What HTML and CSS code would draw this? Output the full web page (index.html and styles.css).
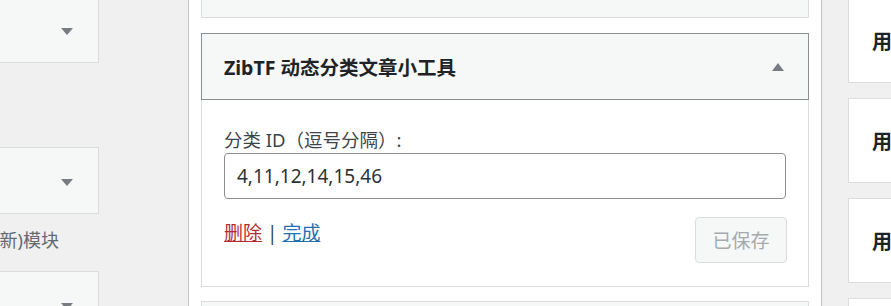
FILE: index.html
```html
<!DOCTYPE html>
<html lang="zh-CN">
<head>
<meta charset="UTF-8">
<meta name="viewport" content="width=device-width, initial-scale=1.0">
<title>小工具</title>
<link rel="stylesheet" href="styles.css">
</head>
<body>

<!-- 可用小工具 -->
<div class="available">
  <div class="avail-item first">
    <div class="avail-top"><span class="arrow-down"></span></div>
  </div>
  <div class="avail-item">
    <div class="avail-top"><span class="arrow-down"></span></div>
    <div class="avail-desc"><span>显示文章列表(最新)模块</span></div>
  </div>
  <div class="avail-item">
    <div class="avail-top"><span class="arrow-down"></span></div>
  </div>
</div>

<!-- 侧边栏 -->
<div class="sidebar">
  <div class="widget-closed first"></div>

  <div class="widget">
    <div class="widget-top">
      <h3>ZibTF 动态分类文章小工具</h3>
      <span class="arrow-up"></span>
    </div>
    <div class="widget-inside">
      <label for="cats">分类 ID（逗号分隔）:</label>
      <input type="text" id="cats" value="4,11,12,14,15,46">
      <div class="widget-actions">
        <div class="links">
          <a href="#" class="delete">删除</a> | <a href="#" class="done">完成</a>
        </div>
        <button type="button" disabled>已保存</button>
      </div>
    </div>
  </div>

  <div class="widget-closed"></div>
</div>

<!-- 其它侧边栏 -->
<div class="other">
  <div class="holder first"><h2>用户中心侧边栏</h2></div>
  <div class="holder"><h2>用户中心顶部</h2></div>
  <div class="holder"><h2>用户中心底部</h2></div>
  <div class="holder"><h2>用户中心其它</h2></div>
</div>

</body>
</html>
```

FILE: styles.css
```css
html, body {
  margin: 0;
  height: 306px;
  overflow: hidden;
}
body {
  display: flex;
  background: #f0f0f1;
  font-family: "Noto Sans", "Noto Sans CJK SC", sans-serif;
  color: #3c434a;
}

/* left column */
.available {
  width: 188px;
  flex: none;
  overflow: hidden;
}
.avail-item {
  width: 99px;
}
.avail-item.first {
  margin-top: -4px;
  margin-bottom: 84px;
}
.avail-top {
  box-sizing: border-box;
  height: 67px;
  background: #f6f7f7;
  border: 1px solid #dcdcde;
  border-left: none;
  display: flex;
  justify-content: flex-end;
  align-items: center;
  padding: 3px 25px 0 0;
}
.avail-desc {
  display: flex;
  justify-content: flex-end;
  padding-right: 40px;
  margin: 16px 0 20px;
  font-size: 18px;
  line-height: 21px;
  color: #646970;
  white-space: nowrap;
}
.arrow-down {
  width: 0;
  height: 0;
  border-left: 6px solid transparent;
  border-right: 6px solid transparent;
  border-top: 7px solid #787c82;
}
.arrow-up {
  width: 0;
  height: 0;
  border-left: 6px solid transparent;
  border-right: 6px solid transparent;
  border-bottom: 8px solid #787c82;
}

/* middle column */
.sidebar {
  box-sizing: border-box;
  width: 634px;
  flex: none;
  background: #fff;
  border-left: 1px solid #c3c4c7;
  border-right: 1px solid #c3c4c7;
  padding: 0 12px;
}
.widget-closed {
  box-sizing: border-box;
  height: 67px;
  background: #f6f7f7;
  border: 1px solid #dcdcde;
  margin-top: 14px;
}
.widget-closed.first {
  margin-top: -49px;
}
.widget {
  margin-top: 15px;
}
.widget-top {
  box-sizing: border-box;
  height: 67px;
  background: #f6f7f7;
  border: 1px solid #8c8f94;
  display: flex;
  justify-content: space-between;
  align-items: center;
  padding: 0 24px 0 22px;
}
.widget-top h3 {
  margin: 0;
  font-size: 19.5px;
  font-weight: bold;
  color: #1d2327;
}
.widget-inside {
  border: 1px solid #dcdcde;
  border-top: none;
  padding: 27px 22px 23px;
}
label {
  display: block;
  font-size: 18.5px;
  line-height: 26px;
  color: #3c434a;
}
input[type="text"] {
  display: block;
  box-sizing: border-box;
  width: 100%;
  height: 46px;
  margin: 0;
  padding: 0 12px;
  border: 1px solid #8c8f94;
  border-radius: 4px;
  font-family: inherit;
  font-size: 19px;
  color: #2c3338;
}
.widget-actions {
  display: flex;
  justify-content: space-between;
  align-items: flex-start;
  margin-top: 18px;
}
.links {
  padding-top: 2px;
  font-size: 19px;
  line-height: 28px;
  color: #3c434a;
}
.links a.delete {
  color: #b32d2e;
}
.links a.done {
  color: #2271b1;
}
button {
  box-sizing: border-box;
  width: 92px;
  height: 46px;
  margin-right: -1px;
  background: #f6f7f7;
  border: 1px solid #dcdcde;
  border-radius: 4px;
  color: #a7aaad;
  font-family: inherit;
  font-size: 19px;
}

/* right column */
.other {
  flex: 1;
  overflow: hidden;
  padding-left: 26px;
}
.holder {
  box-sizing: border-box;
  width: 300px;
  height: 85px;
  background: #fff;
  border: 1px solid #dcdcde;
  margin-bottom: 15px;
  display: flex;
  align-items: center;
  padding-left: 23px;
}
.holder.first {
  margin-top: -2px;
}
.holder h2 {
  margin: 0;
  font-size: 20px;
  font-weight: bold;
  color: #1d2327;
  white-space: nowrap;
}
```
